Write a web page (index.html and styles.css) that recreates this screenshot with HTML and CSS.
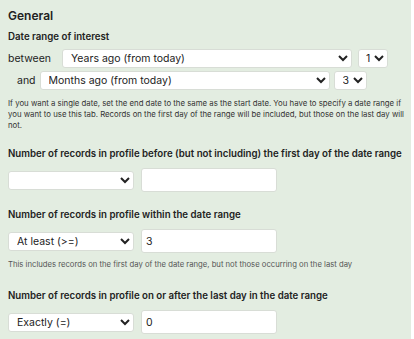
FILE: index.html
```html
<!DOCTYPE html>
<html lang="en">
<head>
    <meta charset="UTF-8">
    <meta name="viewport" content="width=device-width, initial-scale=1.0">
    <title>General</title>
    <link rel="stylesheet" href="styles.css">
</head>
<body>

<div class="panel">
    <h2>General</h2>

    <h3>Date range of interest</h3>
    <div class="range-row">
        <span class="range-label">between</span>
        <select class="unit-select">
            <option>Years ago (from today)</option>
        </select>
        <select class="num-select">
            <option>1</option>
        </select>
    </div>
    <div class="range-row indent">
        <span class="range-label">and</span>
        <select class="unit-select">
            <option>Months ago (from today)</option>
        </select>
        <select class="num-select wider">
            <option>3</option>
        </select>
    </div>
    <p class="help">If you want a single date, set the end date to the same as the start date. You have to specify a date range if you want to use this tab. Records on the first day of the range will be included, but those on the last day will not.</p>

    <h3 class="section">Number of records in profile before (but not including) the first day of the date range</h3>
    <div class="count-row">
        <select class="op-select">
            <option></option>
        </select>
        <input type="text" class="count-input" value="">
    </div>

    <h3 class="section">Number of records in profile within the date range</h3>
    <div class="count-row">
        <select class="op-select">
            <option>At least (&gt;=)</option>
        </select>
        <input type="text" class="count-input" value="3">
    </div>
    <p class="note">This includes records on the first day of the date range, but not those occurring on the last day</p>

    <h3 class="section last">Number of records in profile on or after the last day in the date range</h3>
    <div class="count-row">
        <select class="op-select">
            <option>Exactly (=)</option>
        </select>
        <input type="text" class="count-input" value="0">
    </div>
</div>

</body>
</html>
```

FILE: styles.css
```css
body {
    margin: 0;
    background-color: #fff;
    font-family: "Inter", "Open Sans", sans-serif;
    color: #222;
}
.panel {
    width: 411px;
    height: 339px;
    padding: 8px 0 0 8px;
    box-sizing: border-box;
    background-color: #e3ede1;
    overflow: hidden;
}
h2 {
    margin: 0 0 7px 0;
    font-size: 12px;
    line-height: 16px;
    font-weight: 600;
}
h3 {
    margin: 0 0 6px 0;
    font-size: 9.7px;
    line-height: 12px;
    font-weight: 600;
    white-space: nowrap;
}
h3.section {
    margin-top: 17px;
    margin-bottom: 8px;
}
h3.section.last {
    margin-top: 20px;
}
select, input {
    font-family: inherit;
    font-size: 10.5px;
    color: #222;
    background-color: #fff;
    border: 1px solid #d8ddd6;
    border-radius: 3px;
    box-sizing: border-box;
}
.range-row {
    display: flex;
    align-items: center;
    gap: 6px;
    margin-bottom: 3px;
}
.range-row.indent {
    padding-left: 9px;
    gap: 4px;
}
.range-label {
    font-size: 10.5px;
    width: 48px;
}
.range-row.indent .range-label {
    width: auto;
}
.unit-select {
    width: 290px;
    height: 19px;
    padding: 0 4px;
}
.num-select {
    width: 30px;
    height: 19px;
    padding: 0 0 0 3px;
}
.num-select.wider {
    width: 33px;
    padding-left: 4px;
}
.help {
    width: 398px;
    margin: 8px 0 0 0;
    font-size: 7.8px;
    line-height: 11px;
    color: #333;
}
.count-row {
    display: flex;
    align-items: center;
    gap: 7px;
}
.op-select {
    width: 126px;
    height: 19px;
    padding: 0 4px;
}
.count-input {
    width: 136px;
    height: 24px;
    padding: 0 4px;
}
.note {
    margin: 7px 0 0 0;
    font-size: 7.7px;
    line-height: 10px;
    color: #555;
}
```
